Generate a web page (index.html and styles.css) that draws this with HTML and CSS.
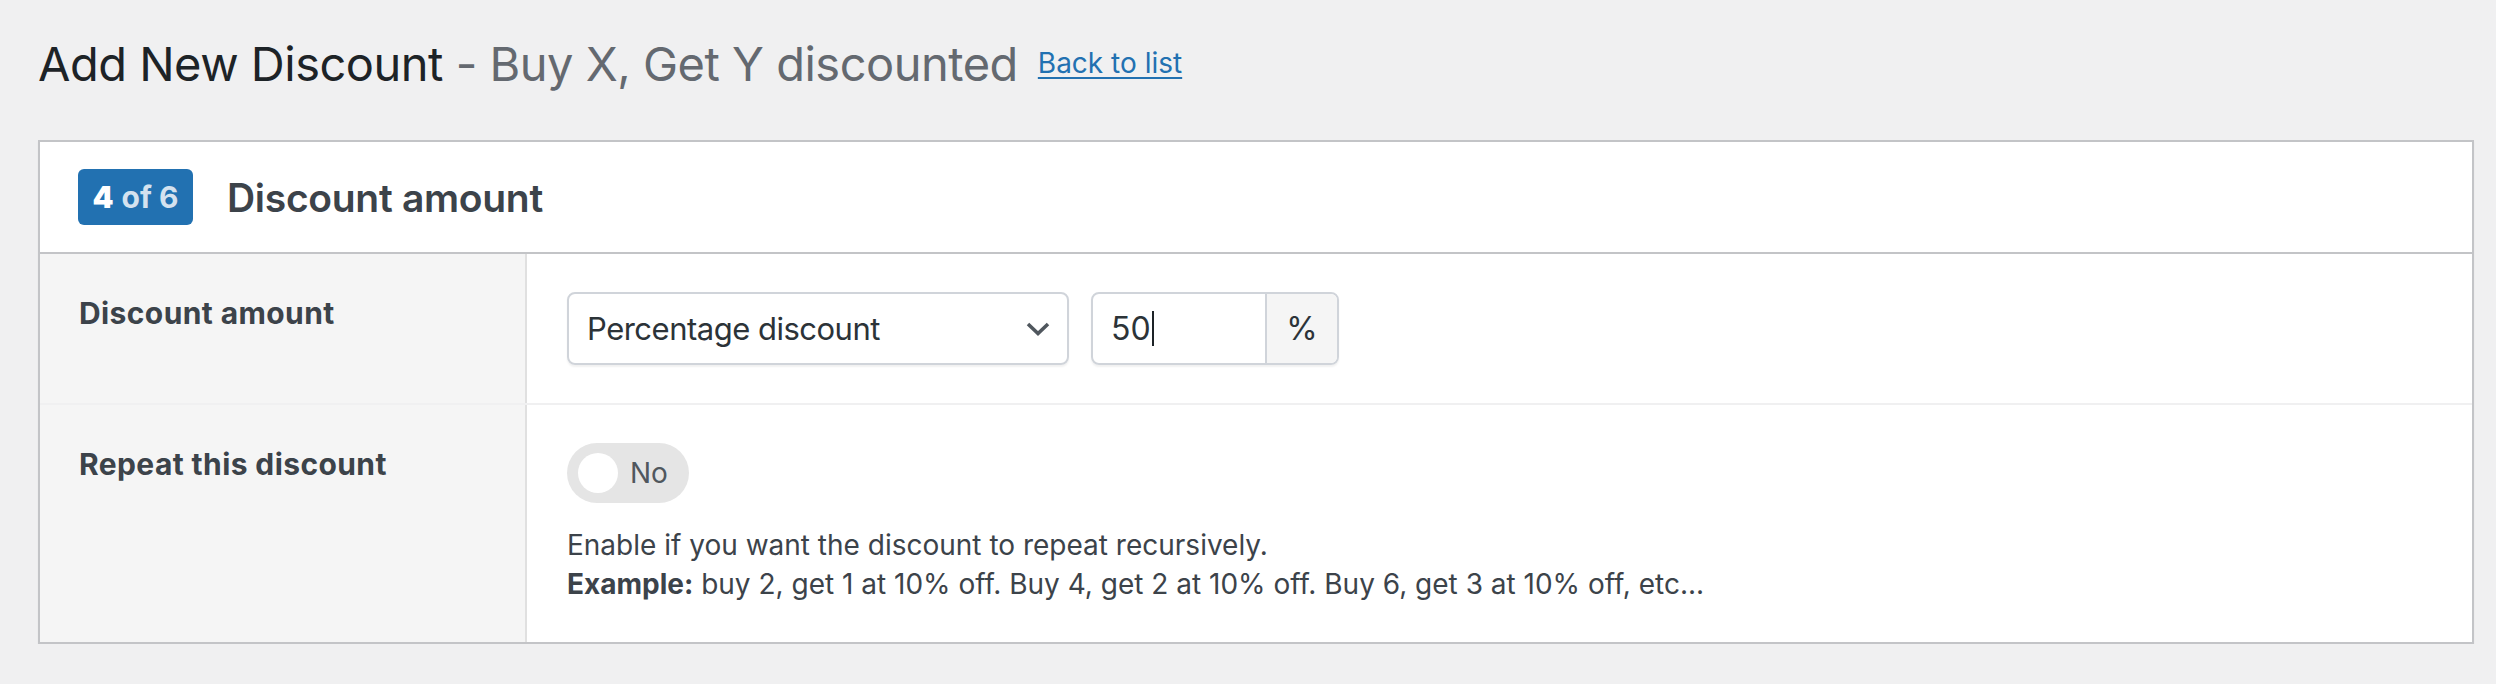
FILE: index.html
```html
<!DOCTYPE html>
<html lang="en">
<head>
  <meta charset="UTF-8">
  <title>Add New Discount</title>
  <link rel="stylesheet" href="styles.css">
</head>
<body>
  <div class="wrap">
    <div class="page-head">
      <h1 class="page-title">Add New Discount <span class="sub">- Buy X, Get Y discounted</span></h1>
      <a class="back-link" href="#">Back to list</a>
    </div>

    <div class="card">
      <div class="card-head">
        <span class="step"><b>4</b> <span class="of">of 6</span></span>
        <h2 class="card-title">Discount amount</h2>
      </div>

      <div class="row">
        <div class="label">Discount amount</div>
        <div class="field">
          <div class="controls">
            <div class="select">
              <span>Percentage discount</span>
              <svg class="chevron" width="24" height="14" viewBox="0 0 24 14">
                <path d="M2 2 L12 11.5 L22 2" fill="none" stroke="#50575e" stroke-width="3.6"/>
              </svg>
            </div>
            <div class="input-group">
              <div class="input">50<span class="caret"></span></div>
              <div class="addon">%</div>
            </div>
          </div>
        </div>
      </div>

      <div class="row last">
        <div class="label">Repeat this discount</div>
        <div class="field">
          <div class="toggle">
            <span class="knob"></span>
            <span class="toggle-text">No</span>
          </div>
          <p class="desc">
            Enable if you want the discount to repeat recursively.<br>
            <strong>Example:</strong> buy 2, get 1 at 10% off. Buy 4, get 2 at 10% off. Buy 6, get 3 at 10% off, etc...
          </p>
        </div>
      </div>
    </div>
  </div>
</body>
</html>
```

FILE: styles.css
```css
*{
  margin: 0;
  padding: 0;
  box-sizing: border-box;
}
body{
  background: #f0f0f1;
  font-family: Inter, "Noto Sans", "Liberation Sans", sans-serif;
  color: #3c434a;
}
.wrap{
  padding: 31px 22px 0 38px;
}

/* title line */
.page-head{
  display: flex;
  align-items: center;
  gap: 20px;
  height: 65px;
}
.page-title{
  font-size: 47px;
  font-weight: 400;
  line-height: 65px;
  color: #1d2327;
  letter-spacing: -0.5px;
}
.page-title .sub{
  color: #646970;
}
.back-link{
  font-size: 28px;
  line-height: 39px;
  color: #2271b1;
  text-decoration: underline;
  text-underline-offset: 4px;
  text-decoration-thickness: 2px;
}

/* card */
.card{
  margin-top: 44px;
  background: #fff;
  border: 2px solid #c3c4c7;
  box-shadow: 0 2px 2px rgba(0,0,0,0.04);
}
.card-head{
  display: flex;
  align-items: center;
  gap: 34px;
  height: 112px;
  padding: 0 38px;
  border-bottom: 2px solid #c3c4c7;
}
.step{
  display: inline-flex;
  align-items: center;
  justify-content: center;
  gap: 8px;
  width: 115px;
  height: 56px;
  background: #2271b1;
  border-radius: 6px;
  color: #fff;
  font-size: 30px;
  font-weight: 700;
}
.step .of{
  color: #d4e2ef;
}
.card-title{
  font-size: 39px;
  font-weight: 600;
  letter-spacing: -0.3px;
  color: #3c434a;
}

/* form rows */
.row{
  display: grid;
  grid-template-columns: 487px 1fr;
  border-bottom: 2px solid #f0f0f1;
}
.row.last{
  border-bottom: 0;
}
.label{
  background: #f5f5f5;
  border-right: 2px solid #e0e0e0;
  padding: 40px 0 0 39px;
  font-size: 30px;
  font-weight: 700;
  line-height: 39px;
  letter-spacing: 0.4px;
  color: #3c434a;
}
.field{
  padding: 38px 40px;
}
.controls{
  display: flex;
  gap: 22px;
}
.select{
  display: flex;
  align-items: center;
  justify-content: space-between;
  width: 502px;
  height: 73px;
  padding: 0 17px 0 18px;
  border: 2px solid #d0d4da;
  border-radius: 8px;
  box-shadow: 0 2px 2px rgba(0,0,0,0.06);
  font-size: 31px;
  letter-spacing: -0.5px;
  color: #2c3338;
}
.chevron{
  display: block;
}
.input-group{
  display: flex;
  height: 73px;
  border: 2px solid #d0d4da;
  border-radius: 8px;
  box-shadow: 0 2px 2px rgba(0,0,0,0.06);
  overflow: hidden;
}
.input{
  display: flex;
  align-items: center;
  width: 172px;
  padding-left: 18px;
  font-size: 32px;
  color: #2c3338;
}
.caret{
  display: inline-block;
  width: 2px;
  height: 35px;
  margin-left: 1px;
  background: #1d2327;
}
.addon{
  display: flex;
  align-items: center;
  justify-content: center;
  width: 72px;
  background: #f5f5f5;
  border-left: 2px solid #d0d4da;
  font-size: 32px;
  color: #2c3338;
}

/* toggle */
.toggle{
  display: inline-flex;
  align-items: center;
  gap: 12px;
  height: 60px;
  padding: 0 21px 0 11px;
  background: #e5e5e5;
  border-radius: 30px;
}
.knob{
  width: 40px;
  height: 40px;
  border-radius: 50%;
  background: #fff;
}
.toggle-text{
  font-size: 28px;
  color: #50575e;
}
.desc{
  margin-top: 23px;
  font-size: 28px;
  line-height: 39px;
  color: #3c434a;
}
.desc strong{
  font-weight: 700;
}
```
